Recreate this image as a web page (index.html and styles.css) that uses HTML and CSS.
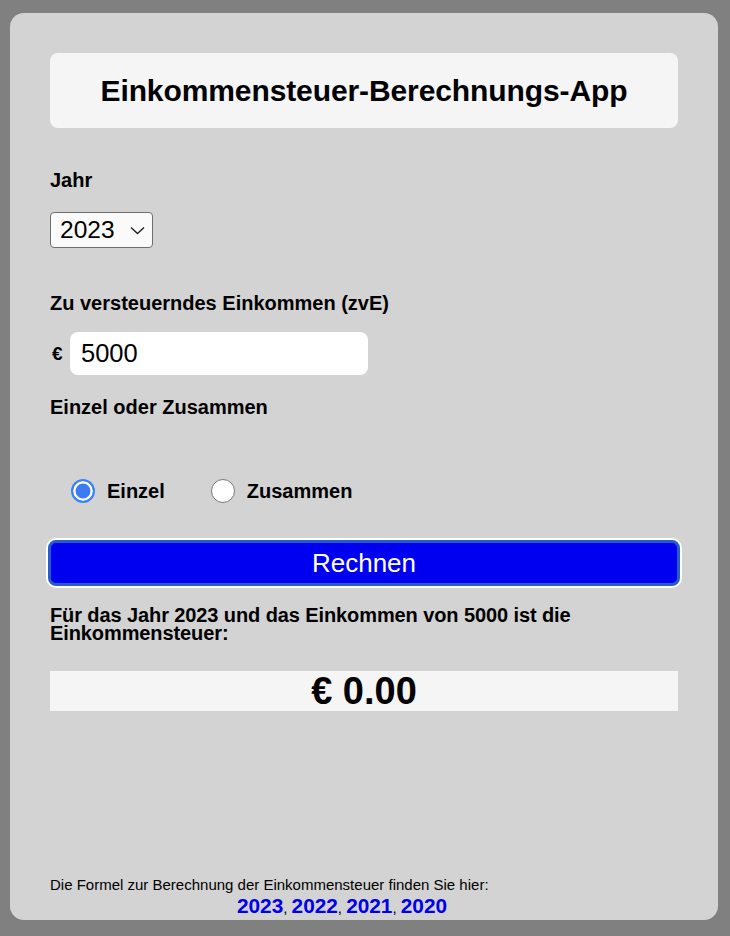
FILE: index.html
```html
<!DOCTYPE html>
<html lang="de">
<head>
<meta charset="utf-8">
<link rel="stylesheet" href="styles.css">
</head>
<body>
<div class="card">
  <div class="title-box"><h1>Einkommensteuer-Berechnungs-App</h1></div>
  <div class="label label-jahr">Jahr</div>
  <div class="select">
    <span>2023</span>
    <svg width="15" height="9" viewBox="0 0 15 9"><path d="M1 1.5 L7.5 7.5 L14 1.5" fill="none" stroke="#222" stroke-width="1.4"/></svg>
  </div>
  <div class="label label-zve">Zu versteuerndes Einkommen (zvE)</div>
  <div class="income-row">
    <span class="euro">€</span>
    <div class="input">5000</div>
  </div>
  <div class="label label-ez">Einzel oder Zusammen</div>
  <div class="radios">
    <div class="radio-item"><span class="radio checked"></span><span class="radio-label">Einzel</span></div>
    <div class="radio-item"><span class="radio"></span><span class="radio-label">Zusammen</span></div>
  </div>
  <div class="button">Rechnen</div>
  <div class="result-text">Für das Jahr 2023 und das Einkommen von 5000 ist die Einkommensteuer:</div>
  <div class="result-box">€ 0.00</div>
  <div class="spacer"></div>
  <div class="footer">
    <div class="footer-text">Die Formel zur Berechnung der Einkommensteuer finden Sie hier:</div>
    <div class="footer-links"><a>2023</a>, <a>2022</a>, <a>2021</a>, <a>2020</a></div>
  </div>
</div>
</body>
</html>
```
FILE: styles.css
```css
html, body { margin: 0; padding: 0; }
body {
  background: #808080;
  font-family: "Liberation Sans", Arial, sans-serif;
  color: #000;
  width: 730px;
  height: 936px;
  overflow: hidden;
}
.card {
  margin: 13px 0 0 10px;
  width: 708px;
  height: 907px;
  box-sizing: border-box;
  background: #d3d3d3;
  border-radius: 14px;
  padding: 40px 40px 0 40px;
  display: flex;
  flex-direction: column;
}
.title-box {
  background: #f5f5f5;
  border-radius: 8px;
  height: 75px;
  display: flex;
  align-items: center;
  justify-content: center;
}
.title-box h1 {
  margin: 0;
  font-size: 30px;
  font-weight: bold;
  letter-spacing: -0.1px;
}
.label {
  font-size: 20px;
  font-weight: bold;
  line-height: 20px;
}
.label-jahr { margin-top: 42px; }
.select {
  margin-top: 22px;
  width: 103px;
  height: 36px;
  box-sizing: border-box;
  border: 1px solid #6e6e6e;
  border-radius: 4px;
  background: #fafafa;
  display: flex;
  align-items: center;
  padding-left: 9px;
  font-size: 24.5px;
}
.select span { width: 62px; }
.select svg { margin-left: 8px; }
.label-zve { margin-top: 45px; }
.income-row {
  margin-top: 19px;
  display: flex;
  align-items: center;
}
.euro {
  font-size: 19px;
  font-weight: bold;
  width: 20px;
  padding-left: 2px;
  box-sizing: border-box;
}
.input {
  width: 298px;
  height: 43px;
  box-sizing: border-box;
  background: #fff;
  border-radius: 8px;
  font-size: 25.5px;
  display: flex;
  align-items: center;
  padding-left: 11px;
}
.label-ez { margin-top: 22px; }
.radios {
  margin-top: 61px;
  display: flex;
  align-items: center;
  padding-left: 21px;
  height: 26px;
}
.radio-item {
  display: flex;
  align-items: center;
  margin-right: 46px;
}
.radio {
  width: 24px;
  height: 24px;
  box-sizing: border-box;
  border-radius: 50%;
  border: 1.5px solid #777;
  background: #fff;
  margin-right: 12px;
}
.radio.checked {
  border: 2.5px solid #3b82f6;
  background: #3b7cf5;
  box-shadow: inset 0 0 0 2.5px #fff;
}
.radio-label {
  font-size: 20px;
  font-weight: bold;
}
.button {
  margin: 36px -2px 0 -2px;
  height: 46px;
  box-sizing: border-box;
  background: #0000f0;
  border: 3px solid #2a5bcc;
  border-radius: 8px;
  box-shadow: 0 0 0 2px #fff;
  color: #fff;
  font-size: 26px;
  display: flex;
  align-items: center;
  justify-content: center;
}
.result-text {
  margin-top: 20px;
  font-size: 20px;
  font-weight: bold;
  line-height: 18px;
  letter-spacing: -0.1px;
  padding-right: 60px;
}
.result-box {
  margin-top: 29px;
  height: 40px;
  background: #f5f5f5;
  font-size: 38px;
  font-weight: bold;
  display: flex;
  align-items: center;
  justify-content: center;
}
.spacer { flex: 1; }
.footer {
  font-size: 15px;
  line-height: 20px;
  padding-bottom: 1px;
}
.footer-links {
  width: 584px;
  text-align: center;
  line-height: 22px;
}
.footer-links a {
  color: #0000ee;
  font-weight: bold;
  font-size: 20.8px;
}
```
